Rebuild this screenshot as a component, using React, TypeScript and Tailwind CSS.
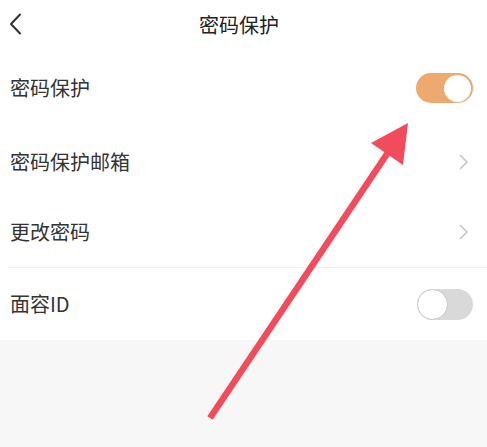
import React from "react";

function Chevron() {
  return (
    <svg width="10" height="16" viewBox="0 0 10 16" className="mr-[18px]">
      <path d="M1.5 1.5 L8 8 L1.5 14.5" fill="none" stroke="#c6c6c6" strokeWidth="1.6" strokeLinecap="round" strokeLinejoin="round" />
    </svg>
  );
}

function Toggle({ on }: { on: boolean }) {
  return on ? (
    <div className="mr-[14px] flex h-[30px] w-[57px] items-center justify-end rounded-full bg-[#eeaa6e] pr-[2px]">
      <div className="h-[27px] w-[27px] rounded-full bg-white" />
    </div>
  ) : (
    <div className="mr-[14px] flex h-[31px] w-[56px] items-center justify-start rounded-full bg-[#d9d9d9]">
      <div className="h-[31px] w-[31px] rounded-full border border-[#c9c9c9] bg-white" />
    </div>
  );
}

export default function App() {
  const font = { fontFamily: '"Noto Sans CJK SC", "Noto Sans", sans-serif' };
  return (
    <div className="relative h-[447px] w-[487px] overflow-hidden bg-[#f7f7f7]" style={font}>
      <div className="bg-white">
        <div className="relative flex h-[50px] items-center justify-center pr-[9px]">
          <svg width="14" height="22" viewBox="0 0 14 22" className="absolute left-[8px] top-[13px]">
            <path d="M12 1.5 L3 11 L12 20.5" fill="none" stroke="#333" strokeWidth="2" strokeLinecap="round" strokeLinejoin="round" />
          </svg>
          <span className="text-[20px] font-normal leading-none text-[#222]">密码保护</span>
        </div>
        <div className="flex h-[76px] items-center justify-between pl-[10px]">
          <span className="text-[20px] leading-none text-[#333]">密码保护</span>
          <Toggle on />
        </div>
        <div className="flex h-[71px] items-center justify-between pl-[10px]">
          <span className="text-[20px] leading-none text-[#333]">密码保护邮箱</span>
          <Chevron />
        </div>
        <div className="flex h-[70px] items-center justify-between pl-[10px]">
          <span className="text-[20px] leading-none text-[#333]">更改密码</span>
          <Chevron />
        </div>
        <div className="ml-[8px] h-px bg-[#f1f1f1]" />
        <div className="flex h-[72px] items-center justify-between pl-[10px]">
          <span className="text-[20px] leading-none text-[#333]">面容ID</span>
          <Toggle on={false} />
        </div>
      </div>
      <svg width="487" height="447" viewBox="0 0 487 447" className="pointer-events-none absolute left-0 top-0">
        <line x1="210" y1="418" x2="389" y2="151" stroke="#f24c5c" strokeWidth="6.5" />
        <polygon points="408,123 371,143 403,165" fill="#f24c5c" />
      </svg>
    </div>
  );
}
